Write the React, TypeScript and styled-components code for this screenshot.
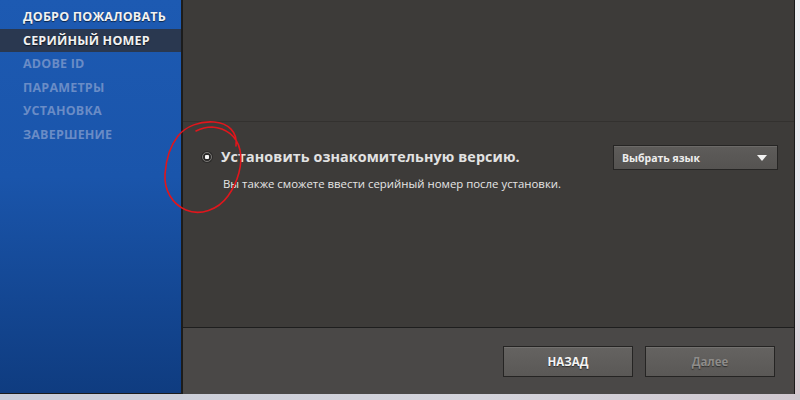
import React from 'react';
import styled, { createGlobalStyle } from 'styled-components';

const GlobalStyle = createGlobalStyle`
  html, body {
    margin: 0;
    padding: 0;
    background: #d8d8e0;
  }
  body {
    font-family: 'Open Sans', 'DejaVu Sans', sans-serif;
  }
`;

const STEPS = [
  { label: 'ДОБРО ПОЖАЛОВАТЬ', state: 'done' },
  { label: 'СЕРИЙНЫЙ НОМЕР', state: 'active' },
  { label: 'ADOBE ID', state: 'todo' },
  { label: 'ПАРАМЕТРЫ', state: 'todo' },
  { label: 'УСТАНОВКА', state: 'todo' },
  { label: 'ЗАВЕРШЕНИЕ', state: 'todo' },
];

type StepState = 'done' | 'active' | 'todo';

function App() {
  return (
    <>
      <GlobalStyle />
      <S.Screen>
        <S.Row>
          <S.Window>
            <S.Sidebar>
              {STEPS.map(step => (
                <S.Step key={step.label} state={step.state as StepState}>
                  {step.label}
                </S.Step>
              ))}
            </S.Sidebar>
            <S.Main>
              <S.Content>
                <S.TopArea />
                <S.Options>
                  <S.OptionRow>
                    <S.OptionText>
                      <S.Title>
                        <S.Radio />
                        Установить ознакомительную версию.
                      </S.Title>
                      <S.Hint>Вы также сможете ввести серийный номер после установки.</S.Hint>
                    </S.OptionText>
                    <S.Select>
                      Выбрать язык
                      <S.Arrow />
                    </S.Select>
                  </S.OptionRow>
                </S.Options>
              </S.Content>
              <S.Footer>
                <S.Button>НАЗАД</S.Button>
                <S.Button disabled>Далее</S.Button>
              </S.Footer>
            </S.Main>
          </S.Window>
          <S.RightStrip />
        </S.Row>
        <S.BottomStrip />
        <S.Scribble viewBox="0 0 800 400" width="800" height="400">
          <path
            d="M236 146 C238 132 228 123 214 122 C200 121 186 126 178 136 C170 146 166 160 165 174 C164 190 172 204 186 210 C200 216 218 210 228 196 C238 182 243 164 240 150 C237 136 226 128 212 127 C206 127 200 129 196 131"
            fill="none"
            stroke="#e0161c"
            strokeWidth="1.6"
            strokeLinecap="round"
          />
        </S.Scribble>
      </S.Screen>
    </>
  );
}

const S = {
  Screen: styled.div`
    position: relative;
    width: 800px;
    height: 400px;
    overflow: hidden;
    display: flex;
    flex-direction: column;
  `,
  Row: styled.div`
    display: flex;
    height: 394px;
  `,
  Window: styled.div`
    display: flex;
    width: 794px;
    background: #1b1b1b;
    border-right: 1px solid #1b1b1b;
  `,
  Sidebar: styled.div`
    width: 183px;
    flex-shrink: 0;
    padding-top: 5px;
    box-sizing: border-box;
    background: linear-gradient(180deg, #1d5ab2 0%, #1a55ab 45%, #0f3c80 100%);
    border-right: 2px solid #1c1c1c;
    border-bottom: 1px solid #1c1c1c;
  `,
  Step: styled.div<{ state: StepState }>`
    height: 23.6px;
    line-height: 23.6px;
    padding-left: 23px;
    font-size: 12.5px;
    font-weight: 700;
    letter-spacing: 0.2px;
    color: ${p => (p.state === 'todo' ? '#6a8cc6' : '#f2f2f2')};
    background: ${p => (p.state === 'active' ? '#2a3850' : 'transparent')};
    text-shadow: ${p => (p.state === 'todo' ? 'none' : '0 1px 1px rgba(0,0,0,0.6)')};
  `,
  Main: styled.div`
    flex: 1;
    display: flex;
    flex-direction: column;
  `,
  Content: styled.div`
    flex: 1;
    display: flex;
    flex-direction: column;
    background: #3d3b39;
    border-bottom: 1px solid #1e1e1e;
  `,
  TopArea: styled.div`
    height: 121px;
    border-bottom: 1px solid #33312f;
  `,
  Options: styled.div`
    padding: 25px 16px 0 19px;
  `,
  OptionRow: styled.div`
    display: flex;
    justify-content: space-between;
    align-items: flex-start;
  `,
  OptionText: styled.div`
    display: flex;
    flex-direction: column;
    gap: 10px;
  `,
  Title: styled.div`
    display: flex;
    align-items: center;
    gap: 9px;
    font-size: 14.3px;
    font-weight: 700;
    color: #e2e2e2;
    letter-spacing: 0.1px;
  `,
  Radio: styled.span`
    width: 10px;
    height: 10px;
    border-radius: 50%;
    box-sizing: border-box;
    border: 1px solid #7a7876;
    background: radial-gradient(circle, #f4f4f4 0 2px, #2a2928 2.5px 100%);
    box-shadow: 0 0 0 1px #2b2a29;
  `,
  Hint: styled.div`
    padding-left: 21px;
    font-size: 11.4px;
    color: #e6e6e6;
  `,
  Select: styled.div`
    width: 165px;
    height: 25px;
    box-sizing: border-box;
    margin-top: -2px;
    padding: 0 10px 0 8px;
    display: flex;
    align-items: center;
    justify-content: space-between;
    font-size: 10.5px;
    font-weight: 700;
    color: #eeeeee;
    background: linear-gradient(180deg, #5e5c5a 0%, #555351 100%);
    border: 1px solid #262524;
    box-shadow: inset 0 1px 0 #6c6a68;
  `,
  Arrow: styled.span`
    width: 0;
    height: 0;
    border-left: 5px solid transparent;
    border-right: 5px solid transparent;
    border-top: 6px solid #f2f2f2;
  `,
  Footer: styled.div`
    height: 66px;
    display: flex;
    justify-content: flex-end;
    align-items: flex-start;
    gap: 12px;
    padding: 18px 19px 0 0;
    box-sizing: border-box;
    background: #4a4847;
  `,
  Button: styled.button`
    width: 130px;
    height: 31px;
    font-family: inherit;
    font-size: 11.5px;
    font-weight: 700;
    color: ${p => (p.disabled ? '#8e8c8a' : '#f4f4f4')};
    background: linear-gradient(180deg, #656361 0%, #5a5856 100%);
    border: 1px solid #252423;
    box-shadow: inset 0 1px 0 #73716f;
    text-shadow: 0 1px 1px rgba(0, 0, 0, 0.5);
    cursor: pointer;
  `,
  RightStrip: styled.div`
    flex: 1;
    background: linear-gradient(180deg, #eef0f4 0%, #e4e4ec 70%, #d8c8d0 100%);
  `,
  BottomStrip: styled.div`
    flex: 1;
    background: linear-gradient(90deg, #c8ccd8 0%, #d4d4dc 60%, #d0c8d0 100%);
  `,
  Scribble: styled.svg`
    position: absolute;
    left: 0;
    top: 0;
    pointer-events: none;
  `,
};

export default App;
